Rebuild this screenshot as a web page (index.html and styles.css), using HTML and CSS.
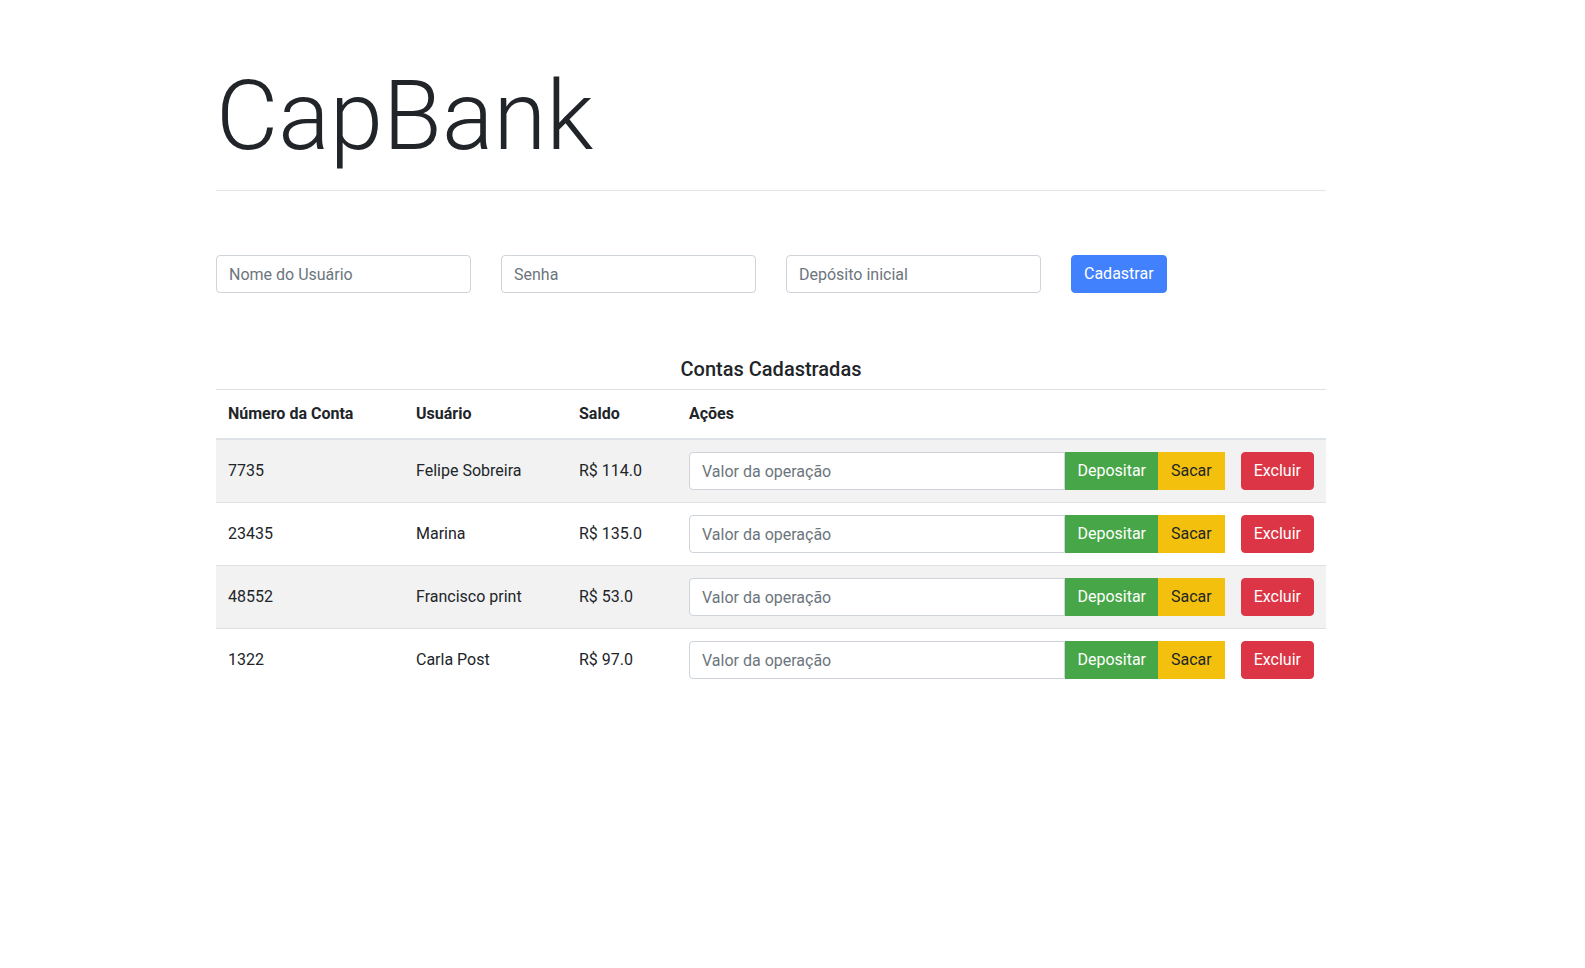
FILE: index.html
```html
<!DOCTYPE html>
<html lang="pt-BR">
<head>
<meta charset="utf-8">
<title>CapBank</title>
<link rel="stylesheet" href="styles.css">
</head>
<body>
<div class="container">
  <header class="header">
    <h1 class="title">CapBank</h1>
    <hr class="divider">
  </header>

  <form class="register">
    <input class="field" type="text" placeholder="Nome do Usuário">
    <input class="field" type="password" placeholder="Senha">
    <input class="field" type="text" placeholder="Depósito inicial">
    <button class="btn btn-primary" type="button">Cadastrar</button>
  </form>

  <section class="accounts">
    <h5 class="accounts-title">Contas Cadastradas</h5>
    <table class="table">
      <colgroup>
        <col class="col-num">
        <col class="col-user">
        <col class="col-saldo">
        <col class="col-actions">
      </colgroup>
      <thead>
        <tr><th>Número da Conta</th><th>Usuário</th><th>Saldo</th><th>Ações</th></tr>
      </thead>
      <tbody>
        <tr>
          <td>7735</td><td>Felipe Sobreira</td><td>R$ 114.0</td>
          <td><div class="actions"><div class="input-group"><input class="op-input" type="text" placeholder="Valor da operação"><button class="btn btn-success grouped deposit" type="button">Depositar</button><button class="btn btn-warning grouped" type="button">Sacar</button></div><button class="btn btn-danger excluir" type="button">Excluir</button></div></td>
        </tr>
        <tr>
          <td>23435</td><td>Marina</td><td>R$ 135.0</td>
          <td><div class="actions"><div class="input-group"><input class="op-input" type="text" placeholder="Valor da operação"><button class="btn btn-success grouped deposit" type="button">Depositar</button><button class="btn btn-warning grouped" type="button">Sacar</button></div><button class="btn btn-danger excluir" type="button">Excluir</button></div></td>
        </tr>
        <tr>
          <td>48552</td><td>Francisco print</td><td>R$ 53.0</td>
          <td><div class="actions"><div class="input-group"><input class="op-input" type="text" placeholder="Valor da operação"><button class="btn btn-success grouped deposit" type="button">Depositar</button><button class="btn btn-warning grouped" type="button">Sacar</button></div><button class="btn btn-danger excluir" type="button">Excluir</button></div></td>
        </tr>
        <tr>
          <td>1322</td><td>Carla Post</td><td>R$ 97.0</td>
          <td><div class="actions"><div class="input-group"><input class="op-input" type="text" placeholder="Valor da operação"><button class="btn btn-success grouped deposit" type="button">Depositar</button><button class="btn btn-warning grouped" type="button">Sacar</button></div><button class="btn btn-danger excluir" type="button">Excluir</button></div></td>
        </tr>
      </tbody>
    </table>
  </section>
</div>
</body>
</html>
```

FILE: styles.css
```css
* { box-sizing: border-box; }

html, body { margin: 0; padding: 0; background: #fff; }

body {
  font-family: Roboto, "Liberation Sans", Arial, sans-serif;
  font-size: 16px;
  line-height: 1.5;
  color: #212529;
}

.container {
  width: 1110px;
  margin: 0 0 0 216px;
}

.header { padding-top: 59px; }

.title {
  margin: 0 0 16px;
  font-size: 96px;
  font-weight: 300;
  line-height: 1.2;
  letter-spacing: 0;
}

.divider {
  margin: 0;
  border: 0;
  border-top: 1px solid rgba(0, 0, 0, 0.1);
  height: 0;
}

.register {
  display: flex;
  gap: 30px;
  margin-top: 64px;
  align-items: center;
}

.field, .op-input {
  height: 38px;
  padding: 6px 12px;
  font-family: inherit;
  font-size: 16px;
  line-height: 1.5;
  color: #495057;
  background: #fff;
  border: 1px solid #ced4da;
  border-radius: 4px;
  outline: none;
}

.field { width: 255px; }

.field::placeholder, .op-input::placeholder { color: #6c757d; opacity: 1; }

.btn {
  height: 38px;
  padding: 6px 12px;
  font-family: inherit;
  font-size: 16px;
  line-height: 1.5;
  border: 1px solid transparent;
  border-radius: 4px;
  cursor: pointer;
  white-space: nowrap;
}

.btn-primary { background: #4281fd; border-color: #4281fd; color: #fff; }
.btn-success { background: #47a647; border-color: #47a647; color: #fff; }
.btn-warning { background: #f3c10d; border-color: #f3c10d; color: #212529; }
.btn-danger  { background: #dc3545; border-color: #dc3545; color: #fff; }

.accounts { margin-top: 64px; }

.accounts-title {
  margin: 0 0 8px;
  font-size: 20px;
  font-weight: 500;
  line-height: 1.2;
  text-align: center;
}

.table {
  width: 100%;
  border-collapse: collapse;
  table-layout: fixed;
}

.col-num { width: 188px; }
.col-user { width: 163px; }
.col-saldo { width: 110px; }

.table th, .table td {
  padding: 12px;
  border-top: 1px solid #dee2e6;
  text-align: left;
  vertical-align: middle;
}

.table th { font-weight: 700; }

.table thead th { border-bottom: 2px solid #dee2e6; }

.table tbody tr:nth-child(odd) { background: rgba(0, 0, 0, 0.05); }

.actions { display: flex; align-items: center; }

.input-group { display: flex; flex: 1; min-width: 0; }

.op-input {
  flex: 1;
  min-width: 0;
  border-radius: 4px 0 0 4px;
}

.grouped { border-radius: 0; }

.deposit { padding-left: 11px; padding-right: 11px; }

.excluir { margin-left: 16px; }
```
